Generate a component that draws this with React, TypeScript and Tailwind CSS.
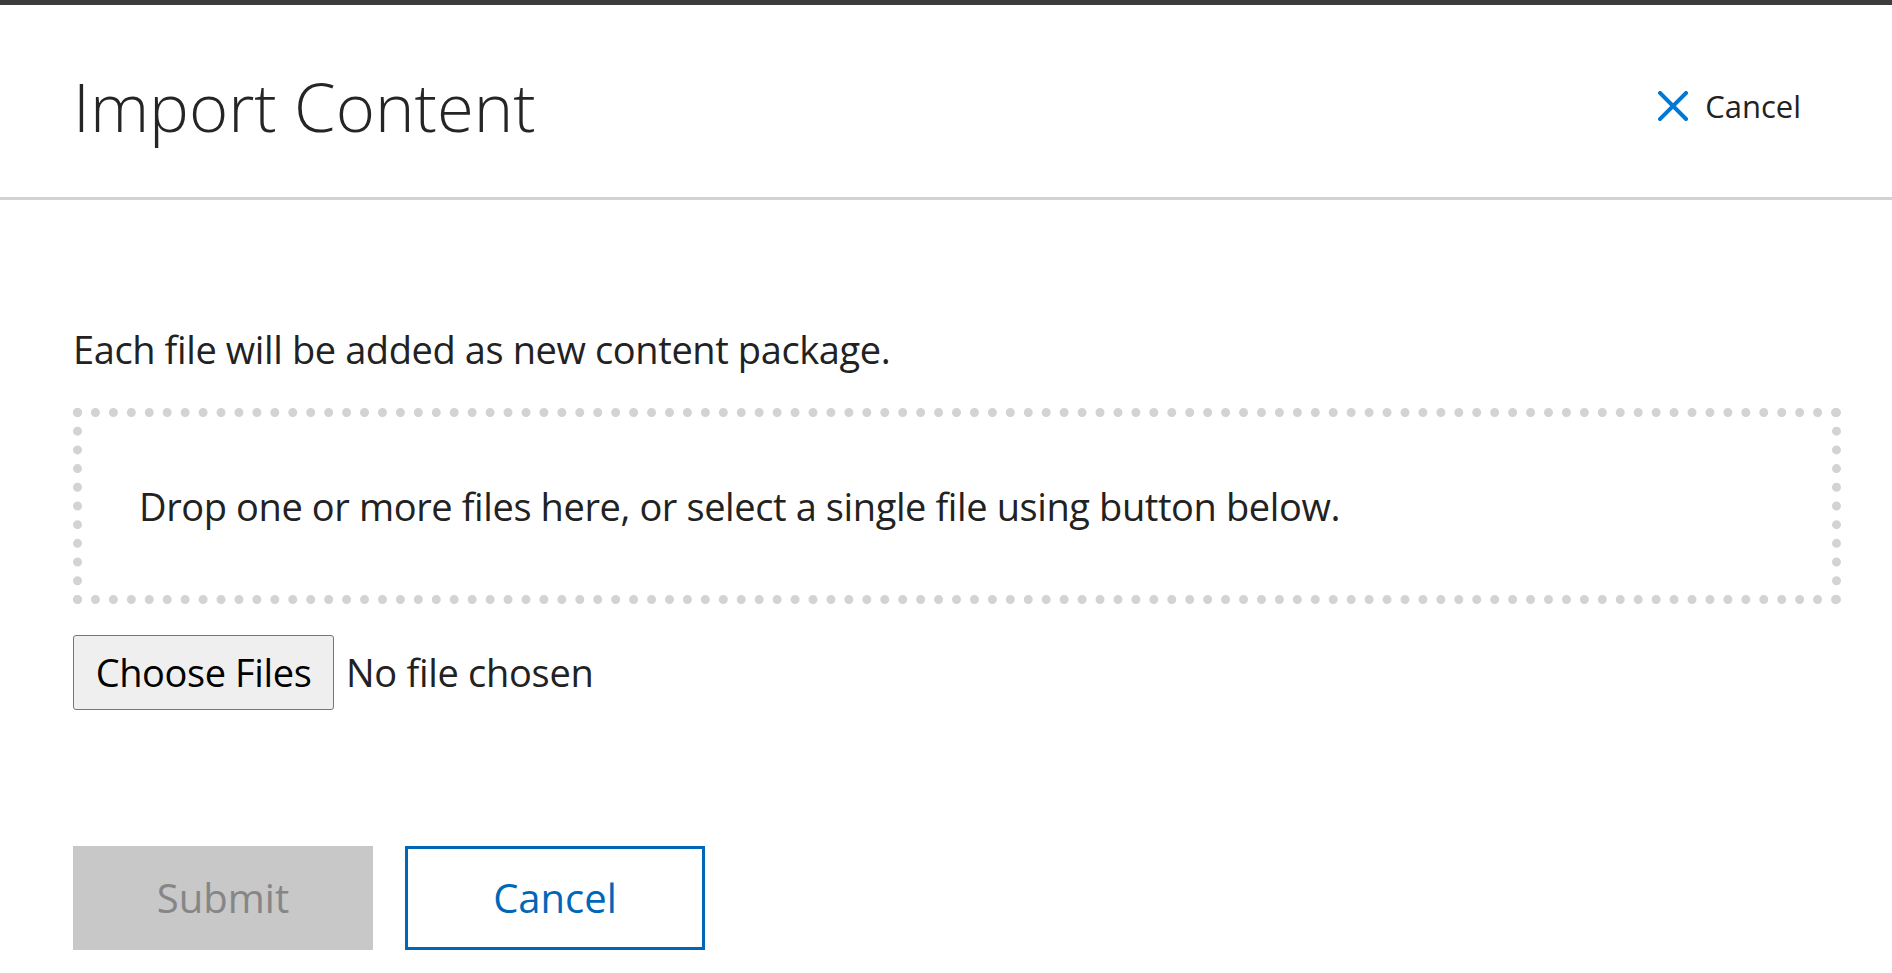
import { useState } from "react";

function CloseIcon() {
  return (
    <svg width="30" height="30" viewBox="0 0 30 30" fill="none" aria-hidden="true">
      <path d="M2 2 L28 28 M28 2 L2 28" stroke="#0078d4" strokeWidth="4" strokeLinecap="square" />
    </svg>
  );
}

export default function App() {
  const [fileName, setFileName] = useState("");

  return (
    <div className="min-h-screen bg-white font-['Open_Sans','Noto_Sans',sans-serif] text-[#222]">
      <div className="h-[5px] bg-[#3c3c3c]" />

      <header className="flex h-[195px] items-center justify-between border-b-[3px] border-[#d2d2d2] pt-[10px] pl-[73px] pr-[91px]">
        <h1 className="text-[67px] font-light leading-none text-[#252525]">Import Content</h1>
        <button type="button" className="flex items-center gap-[17px] text-[31px] leading-none text-[#222]">
          <CloseIcon />
          <span>Cancel</span>
        </button>
      </header>

      <main className="pl-[73px] pr-[51px] pt-[123px]">
        <p className="text-[38px] leading-[53px] tracking-[-0.4px]">Each file will be added as new content package.</p>

        <div className="mt-[32px] flex h-[196px] items-center border-[9px] border-dotted border-[#d3d3d3] pl-[57px]">
          <p className="text-[38px] leading-[53px] tracking-[-0.4px]">
            Drop one or more files here, or select a single file using button below.
          </p>
        </div>

        <label className="mt-[31px] flex items-center">
          <span className="flex h-[75px] w-[261px] items-center justify-center rounded-[3px] border border-[#767676] bg-[#efefef] text-[38px] tracking-[-0.4px] text-black">
            Choose Files
          </span>
          <span className="ml-[12px] text-[38px] tracking-[-0.3px]">{fileName || "No file chosen"}</span>
          <input
            type="file"
            multiple
            className="hidden"
            onChange={(e) => setFileName(e.target.files && e.target.files.length ? `${e.target.files.length} files` : "")}
          />
        </label>

        <div className="mt-[136px] flex gap-[32px]">
          <button type="button" disabled className="h-[104px] w-[300px] bg-[#c8c8c8] text-[40px] text-[#868686]">
            Submit
          </button>
          <button type="button" className="h-[104px] w-[300px] border-[3px] border-[#0067b8] bg-white text-[40px] text-[#0067b8]">
            Cancel
          </button>
        </div>
      </main>
    </div>
  );
}
